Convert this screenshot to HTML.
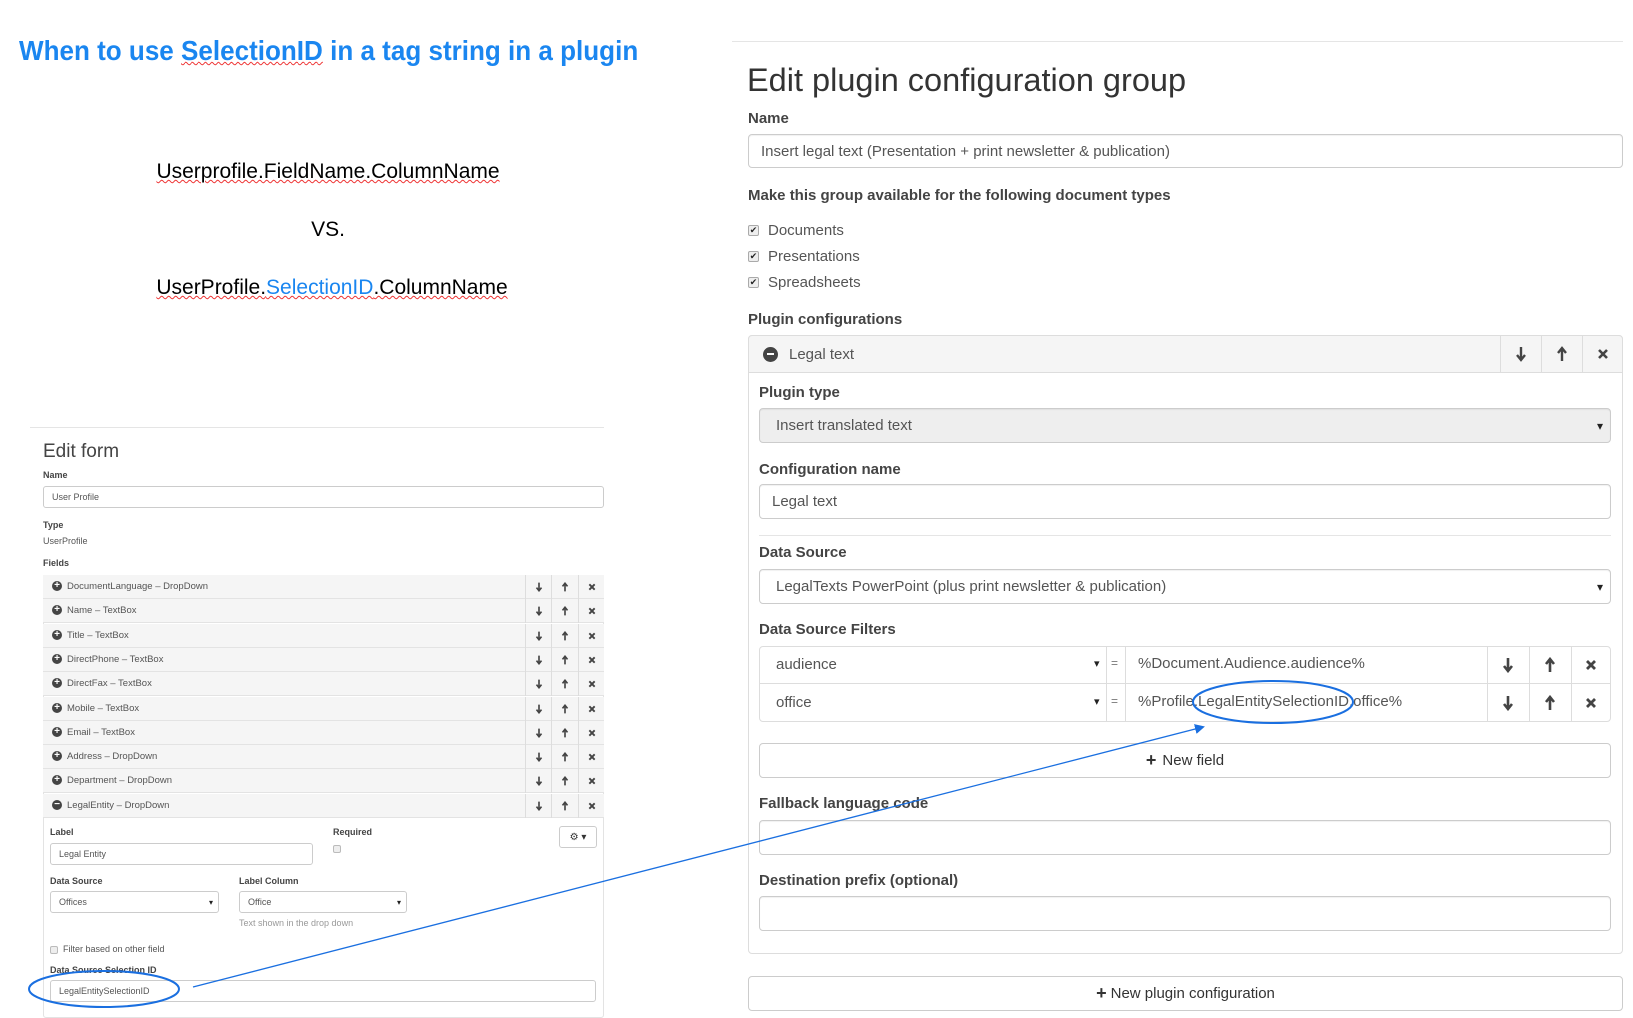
<!DOCTYPE html>
<html><head><meta charset="utf-8"><style>
*{box-sizing:border-box;margin:0;padding:0}
body{width:1633px;height:1018px;background:#fff;position:relative;overflow:hidden;font-family:"Liberation Sans",sans-serif;color:#333}
.a{position:absolute;white-space:nowrap}
.lbl{position:absolute;font-weight:bold;color:#444;font-size:15px;white-space:nowrap}
.inp{position:absolute;border:1px solid #ccc;border-radius:4px;background:#fff;box-shadow:inset 0 1px 1px rgba(0,0,0,.06);font-size:15px;color:#555;padding-left:12px;display:flex;align-items:center;white-space:nowrap}
.sel::after{content:"▾";position:absolute;right:7px;font-size:12px;color:#222}
.si.sel::after{font-size:8px;right:5px}
.btn{position:absolute;border:1px solid #ccc;border-radius:4px;background:#fff;display:flex;align-items:center;justify-content:center;font-size:15px;color:#333}
.ic{position:absolute;display:flex;align-items:center;justify-content:center;border-left:1px solid #ddd;height:100%;top:0}
.sl{position:absolute;font-weight:bold;color:#444;font-size:9px;white-space:nowrap}
.si{position:absolute;border:1px solid #ccc;border-radius:3px;background:#fff;font-size:9px;color:#555;padding-left:8px;display:flex;align-items:center;white-space:nowrap}
.row{position:absolute;left:43px;width:561px;height:24px;background:#f5f5f5;border-bottom:1px solid #e3e3e3;font-size:9.5px;color:#555}
.row .t{position:absolute;left:24px;top:6px}
.row .c{position:absolute;left:9px;top:6px;width:10px;height:10px;border-radius:50%;background:#444;color:#fff;font-size:10px;line-height:9px;text-align:center;font-weight:bold}
.row .b{position:absolute;top:0;height:24px;width:26px;border-left:1px solid #ddd;display:flex;align-items:center;justify-content:center}
.chk{position:absolute;width:11px;height:11px;border:1px solid #aaa;border-radius:2px;background:#eee;font-size:9px;line-height:9px;text-align:center;color:#222}
</style></head><body>

<div class="a" style="left:19px;top:35px;font-size:28px;font-weight:bold;color:#1a86f0;transform:scaleX(0.93);transform-origin:left">When to use <span style="text-decoration:underline wavy #e33;text-decoration-thickness:1px">SelectionID</span> in a tag string in a plugin</div>

<div class="a" style="left:0;width:656px;text-align:center;top:160px;font-size:21px;color:#000"><span style="text-decoration:underline wavy #e33;text-decoration-thickness:1px">Userprofile.FieldName.ColumnName</span></div>
<div class="a" style="left:0;width:656px;text-align:center;top:218px;font-size:21px;color:#000">VS.</div>
<div class="a" style="left:0;width:664px;text-align:center;top:276px;font-size:21px;color:#000"><span style="text-decoration:underline wavy #e33;text-decoration-thickness:1px">UserProfile.<span style="color:#1a86f0">SelectionID</span>.ColumnName</span></div>

<!-- left form -->
<div class="a" style="left:30px;top:427px;width:574px;border-top:1px solid #e5e5e5"></div>
<div class="a" style="left:43px;top:441px;font-size:19px;color:#444">Edit form</div>
<div class="sl" style="left:43px;top:470px">Name</div>
<div class="si" style="left:43px;top:486px;width:561px;height:22px">User Profile</div>
<div class="sl" style="left:43px;top:520px">Type</div>
<div class="a" style="left:43px;top:536px;font-size:9px;color:#555">UserProfile</div>
<div class="sl" style="left:43px;top:558px">Fields</div>
<div class="a" style="left:43px;top:575px;width:561px;height:443px;border:1px solid #e3e3e3;border-radius:3px"></div>

<div id="rows"></div>

<div class="sl" style="left:50px;top:827px">Label</div>
<div class="si" style="left:50px;top:843px;width:263px;height:22px">Legal Entity</div>
<div class="sl" style="left:333px;top:827px">Required</div>
<div class="chk" style="left:333px;top:845px;width:8px;height:8px;border-color:#bbb"></div>
<div class="si" style="left:559px;top:826px;width:38px;height:22px;padding:0;justify-content:center;font-size:10px;color:#333">⚙ ▾</div>
<div class="sl" style="left:50px;top:876px">Data Source</div>
<div class="si sel" style="left:50px;top:891px;width:169px;height:22px">Offices</div>
<div class="sl" style="left:239px;top:876px">Label Column</div>
<div class="si sel" style="left:239px;top:891px;width:168px;height:22px">Office</div>
<div class="a" style="left:239px;top:918px;font-size:9px;color:#999">Text shown in the drop down</div>
<div class="chk" style="left:50px;top:946px;width:8px;height:8px;border-color:#bbb"></div>
<div class="a" style="left:63px;top:944px;font-size:9px;color:#555">Filter based on other field</div>
<div class="sl" style="left:50px;top:965px">Data Source Selection ID</div>
<div class="si" style="left:50px;top:980px;width:546px;height:22px">LegalEntitySelectionID</div>

<!-- right -->
<div class="a" style="left:732px;top:41px;width:891px;border-top:1px solid #e5e5e5"></div>
<div class="a" style="left:747px;top:62px;font-size:32.5px;color:#333">Edit plugin configuration group</div>
<div class="lbl" style="left:748px;top:110px">Name</div>
<div class="inp" style="left:748px;top:134px;width:875px;height:34px">Insert legal text (Presentation + print newsletter &amp; publication)</div>
<div class="lbl" style="left:748px;top:187px">Make this group available for the following document types</div>
<div class="chk" style="left:748px;top:225px">✔</div><div class="a" style="left:768px;top:222px;font-size:15px;color:#555">Documents</div>
<div class="chk" style="left:748px;top:251px">✔</div><div class="a" style="left:768px;top:248px;font-size:15px;color:#555">Presentations</div>
<div class="chk" style="left:748px;top:277px">✔</div><div class="a" style="left:768px;top:274px;font-size:15px;color:#555">Spreadsheets</div>
<div class="lbl" style="left:748px;top:311px">Plugin configurations</div>

<div class="a" style="left:748px;top:335px;width:875px;height:619px;border:1px solid #ddd;border-radius:4px"></div>
<div class="a" style="left:748px;top:335px;width:875px;height:38px;background:#f5f5f5;border:1px solid #ddd;border-radius:4px 4px 0 0">
  <div class="a" style="left:14px;top:11px;width:15px;height:15px;border-radius:50%;background:#444"><div style="position:absolute;left:4px;top:6px;width:7px;height:2px;background:#fff"></div></div>
  <div class="a" style="left:40px;top:10px;font-size:15px;color:#555">Legal text</div>
  <div class="ic" style="left:751px;width:41px"><svg width="12" height="16" viewBox="0 0 12 16"><path d="M6 1v11M2 9l4 5 4-5" stroke="#444" stroke-width="2.4" fill="none"/></svg></div>
  <div class="ic" style="left:792px;width:41px"><svg width="12" height="16" viewBox="0 0 12 16"><path d="M6 15V4M2 7l4-5 4 5" stroke="#444" stroke-width="2.4" fill="none"/></svg></div>
  <div class="ic" style="left:833px;width:41px"><svg width="12" height="12" viewBox="0 0 12 12"><path d="M2 2l8 8M10 2l-8 8" stroke="#444" stroke-width="2.6"/></svg></div>
</div>

<div class="lbl" style="left:759px;top:384px">Plugin type</div>
<div class="inp sel" style="left:759px;top:408px;width:852px;height:35px;background:#eee;padding-left:16px">Insert translated text</div>
<div class="lbl" style="left:759px;top:461px">Configuration name</div>
<div class="inp" style="left:759px;top:484px;width:852px;height:35px">Legal text</div>
<div class="a" style="left:759px;top:535px;width:852px;border-top:1px solid #e5e5e5"></div>
<div class="lbl" style="left:759px;top:544px">Data Source</div>
<div class="inp sel" style="left:759px;top:569px;width:852px;height:35px;padding-left:16px">LegalTexts PowerPoint (plus print newsletter &amp; publication)</div>
<div class="lbl" style="left:759px;top:621px">Data Source Filters</div>

<div class="a" style="left:759px;top:646px;width:852px;height:76px;border:1px solid #ddd;border-radius:4px"></div>
<div class="a" style="left:759px;top:683px;width:852px;border-top:1px solid #ddd"></div>
<div class="a" style="left:1106px;top:646px;height:76px;border-left:1px solid #ddd"></div>
<div class="a" style="left:1125px;top:646px;height:76px;border-left:1px solid #ddd"></div>
<div class="a" style="left:1487px;top:646px;height:76px;border-left:1px solid #ddd"></div>
<div class="a" style="left:1529px;top:646px;height:76px;border-left:1px solid #ddd"></div>
<div class="a" style="left:1571px;top:646px;height:76px;border-left:1px solid #ddd"></div>
<div class="a" style="left:776px;top:656px;font-size:15px;color:#555">audience</div>
<div class="a" style="left:776px;top:694px;font-size:15px;color:#555">office</div>
<div class="a" style="left:1094px;top:657px;font-size:11px;color:#222">▾</div>
<div class="a" style="left:1094px;top:695px;font-size:11px;color:#222">▾</div>
<div class="a" style="left:1111px;top:656px;font-size:12px;color:#777">=</div>
<div class="a" style="left:1111px;top:694px;font-size:12px;color:#777">=</div>
<div class="a" style="left:1138px;top:655px;font-size:15px;color:#555">%Document.Audience.audience%</div>
<div class="a" style="left:1138px;top:693px;font-size:15px;color:#555">%Profile.LegalEntitySelectionID.office%</div>
<div id="fb"></div>

<div class="btn" style="left:759px;top:743px;width:852px;height:35px"><b style="font-size:18px;margin-right:6px">+</b>New field</div>
<div class="lbl" style="left:759px;top:795px">Fallback language code</div>
<div class="inp" style="left:759px;top:820px;width:852px;height:35px"></div>
<div class="lbl" style="left:759px;top:872px">Destination prefix (optional)</div>
<div class="inp" style="left:759px;top:896px;width:852px;height:35px"></div>
<div class="btn" style="left:748px;top:976px;width:875px;height:35px"><b style="font-size:18px;margin-right:4px">+</b>New plugin configuration</div>

<svg class="a" style="left:0;top:0" width="1633" height="1018">
<defs><marker id="ar" markerWidth="10" markerHeight="10" refX="8" refY="5" orient="auto" markerUnits="userSpaceOnUse"><path d="M0 0L10 5L0 10z" fill="#1a6fe0"/></marker></defs>
<ellipse cx="104" cy="989" rx="75" ry="18" fill="none" stroke="#1a6fe0" stroke-width="2"/>
<ellipse cx="1273" cy="702" rx="80" ry="21" fill="none" stroke="#1a6fe0" stroke-width="2"/>
<line x1="193" y1="987" x2="1203" y2="727" stroke="#1a6fe0" stroke-width="1.3" marker-end="url(#ar)"/>
</svg>

<script>
var names=["DocumentLanguage – DropDown","Name – TextBox","Title – TextBox","DirectPhone – TextBox","DirectFax – TextBox","Mobile – TextBox","Email – TextBox","Address – DropDown","Department – DropDown","LegalEntity – DropDown"];
var dn='<svg width="8" height="10" viewBox="0 0 12 16"><path d="M6 1v11M2 9l4 5 4-5" stroke="#444" stroke-width="2.6" fill="none"/></svg>';
var up='<svg width="8" height="10" viewBox="0 0 12 16"><path d="M6 15V4M2 7l4-5 4 5" stroke="#444" stroke-width="2.6" fill="none"/></svg>';
var x='<svg width="8" height="8" viewBox="0 0 12 12"><path d="M2 2l8 8M10 2l-8 8" stroke="#444" stroke-width="2.8"/></svg>';
var h='';
names.forEach(function(n,i){h+='<div class="row" style="top:'+(575+i*24.3)+'px"><div class="c">'+(i==9?'−':'+')+'</div><div class="t">'+n+'</div><div class="b" style="left:482px">'+dn+'</div><div class="b" style="left:508px">'+up+'</div><div class="b" style="left:535px">'+x+'</div></div>';});
document.getElementById('rows').outerHTML=h;
var f='';
[646,684].forEach(function(t){f+='<div class="a" style="left:1487px;top:'+t+'px;width:42px;height:37px;display:flex;align-items:center;justify-content:center">'+dn.replace(/width="8" height="10"/,'width="12" height="16"')+'</div><div class="a" style="left:1529px;top:'+t+'px;width:42px;height:37px;display:flex;align-items:center;justify-content:center">'+up.replace(/width="8" height="10"/,'width="12" height="16"')+'</div><div class="a" style="left:1571px;top:'+t+'px;width:40px;height:37px;display:flex;align-items:center;justify-content:center">'+x.replace(/width="8" height="8"/,'width="12" height="12"')+'</div>';});
document.getElementById('fb').outerHTML=f;
</script>
</body></html>
